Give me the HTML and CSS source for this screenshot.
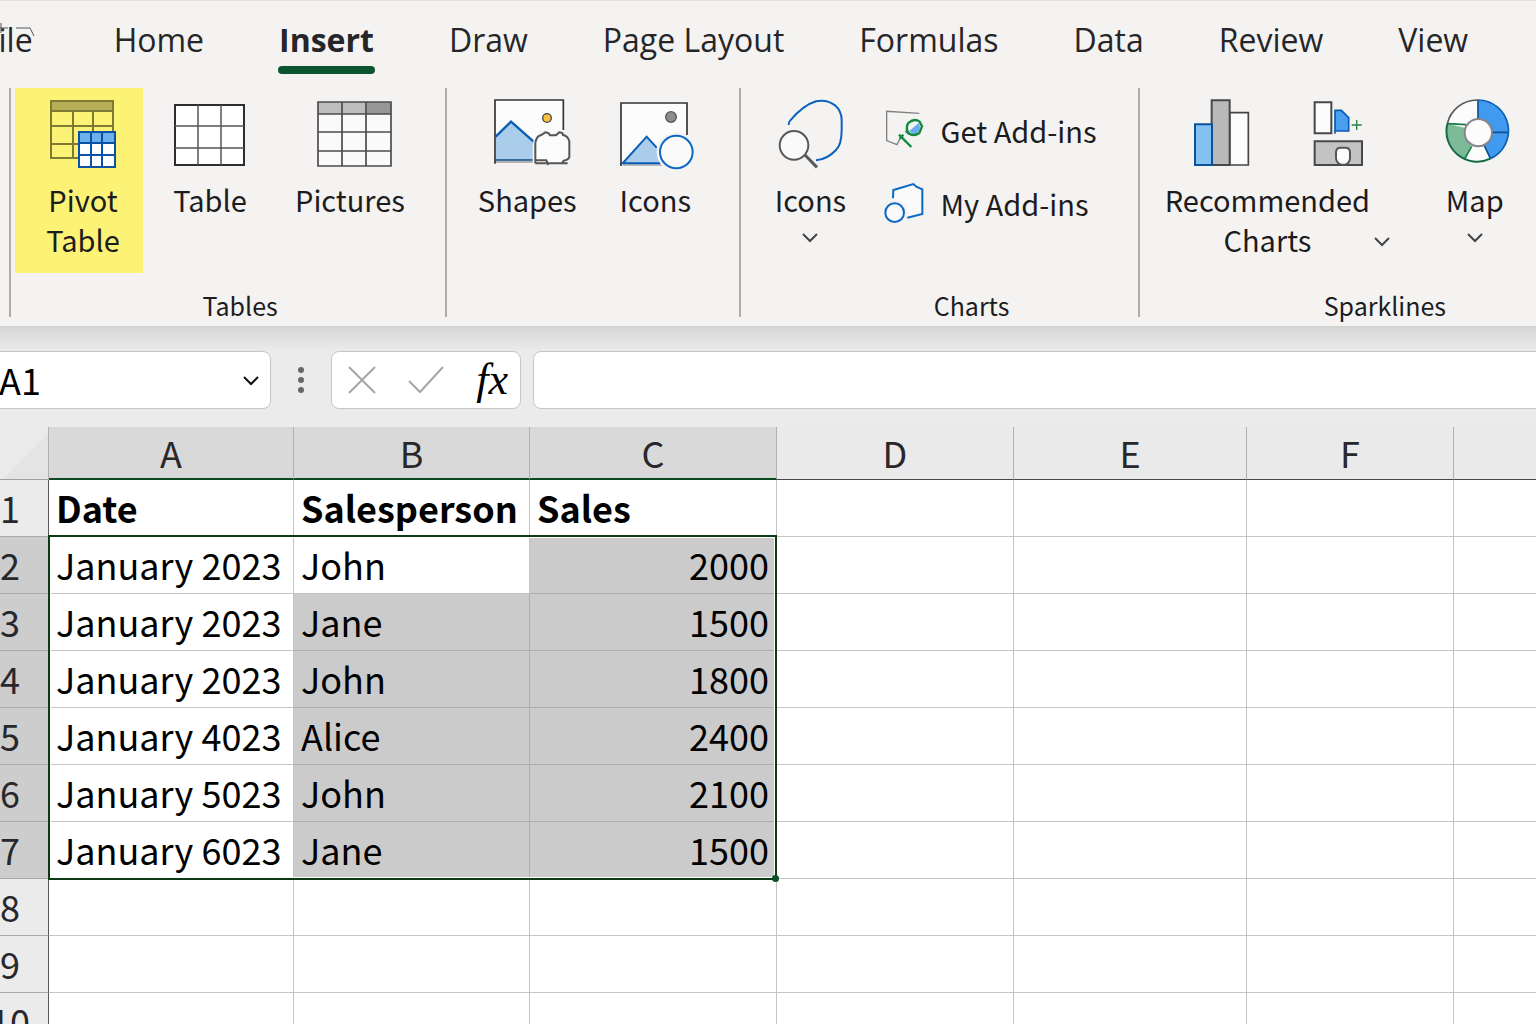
FILE: index.html
```html
<!DOCTYPE html>
<html lang="en">
<head>
  <meta charset="UTF-8">
  <meta name="viewport" content="width=device-width, initial-scale=1.0">
  <title>Spreadsheet</title>
  <link rel="stylesheet" href="styles.css">
</head>
<body>
  <nav class="tabs">
    <button class="tab">File</button>
    <button class="tab">Home</button>
    <button class="tab active">Insert</button>
    <button class="tab">Draw</button>
    <button class="tab">Page Layout</button>
    <button class="tab">Formulas</button>
    <button class="tab">Data</button>
    <button class="tab">Review</button>
    <button class="tab">View</button>
    <svg class="tab-mark" viewBox="0 0 36 16" aria-hidden="true">
      <path d="M1 0v10M0 5h8M16 5h14l4 8" fill="none" stroke="#555" stroke-width="1"/>
    </svg>
  </nav>

  <div class="ribbon">
    <section class="group tables">
      <div class="tools">
        <button class="tool highlight">
          <svg class="icon" viewBox="0 0 84 70" aria-hidden="true">
            <path d="M10 2h62v10H10z" fill="#b5ae57"/>
            <path d="M10 2h62v57H10zM10 12h62M10 27h62M10 45h62M32 12v47M52 12v47" fill="none" stroke="#7f7a33" stroke-width="2"/>
            <path d="M38 32h36v36H38z" fill="#fff"/>
            <path d="M38 32h36v12H38z" fill="#6cb0ea"/>
            <path d="M38 33h36v35H38zM38 44h36M38 56h36M50 32v36M61 32v36" fill="none" stroke="#0a52a8" stroke-width="2"/>
          </svg>
          <span>Pivot<br>Table</span>
        </button>
        <button class="tool">
          <svg class="icon" viewBox="0 0 84 70" aria-hidden="true">
            <path d="M7 6h69v60H7z" fill="#fff" stroke="#2e2e30" stroke-width="2"/>
            <path d="M30 6v60M53 6v60M7 27h69M7 49h69" stroke="#555" stroke-width="1.5"/>
          </svg>
          <span>Table</span>
        </button>
        <button class="tool">
          <svg class="icon" viewBox="0 0 84 70" aria-hidden="true">
            <path d="M10 3h73v64H10z" fill="#fafafa"/>
            <path d="M10 3h49v12H10z" fill="#bdbdbd"/>
            <path d="M59 3h24v12H59z" fill="#979797"/>
            <path d="M10 3h73v64H10zM10 15h73M10 33h73M10 52h73M34 3v64M58 3v64" fill="none" stroke="#4c4c4e" stroke-width="1.7"/>
          </svg>
          <span>Pictures</span>
        </button>
      </div>
      <h2>Tables</h2>
    </section>

    <section class="group media">
      <div class="tools">
        <button class="tool">
          <svg class="icon" viewBox="0 0 252 210" aria-hidden="true">
            <path d="M30 3h205v190H30z" fill="#fcfcfc"/>
            <path d="M33 113l45-45 68 60v56H33z" fill="#a9cdea"/>
            <path d="M32 113l46-45 68 60" fill="none" stroke="#0a5db5" stroke-width="7"/>
            <path d="M30 183h120" stroke="#114680" stroke-width="5"/>
            <path d="M30 189h120" stroke="#999" stroke-width="5"/>
            <path d="M30 194V3h205v90" fill="none" stroke="#333" stroke-width="5"/>
            <circle cx="186" cy="57" r="13" fill="#fcc13e" stroke="#444" stroke-width="4"/>
            <path d="M143 198v-62q6-38 36-42l20 10 22-12q46 10 38 44v62z" fill="#f4f3f2"/>
            <path d="M151 193v-60q3-22 18-25l12-8q12 2 14 9h18l10-9q11 1 11 8 15 3 19 19v47q-2 8-17 11l-4 6M152 184h32l6 14M151 193h97" fill="#fcfcfc" stroke="#555" stroke-width="6"/>
          </svg>
          <span>Shapes</span>
        </button>
        <button class="tool">
          <svg class="icon" viewBox="0 0 252 210" aria-hidden="true">
            <path d="M24 12h198v183H24z" fill="#fcfcfc"/>
            <path d="M29 193l72-80 30 33 14 47z" fill="#a9cdea"/>
            <path d="M30 198h120" stroke="#aaa" stroke-width="5"/>
            <path d="M131 146l-30-33-72 80h114" fill="none" stroke="#0a5db5" stroke-width="6"/>
            <path d="M24 201V12h198v96" fill="none" stroke="#333" stroke-width="5"/>
            <circle cx="174" cy="54" r="16" fill="#8c8c8c" stroke="#555" stroke-width="4"/>
            <circle cx="190" cy="159" r="49" fill="#fafafa" stroke="#f4f3f2" stroke-width="20"/>
            <circle cx="190" cy="159" r="49" fill="#fafafa" stroke="#0b68c4" stroke-width="6"/>
          </svg>
          <span>Icons</span>
        </button>
      </div>
    </section>

    <section class="group charts">
      <div class="tools">
        <button class="tool">
          <svg class="icon" viewBox="0 0 252 210" aria-hidden="true">
            <path d="M62 78q-1-8 5-14 40-46 77-57 32-7 57 12 20 17 20 45v28q0 45-17 61-26 28-60 31" fill="none" stroke="#0b62bd" stroke-width="6"/>
            <circle cx="78" cy="139" r="43" fill="#fafafa" stroke="#58585a" stroke-width="6"/>
            <path d="M111 168l36 37" stroke="#58585a" stroke-width="9"/>
          </svg>
          <span>Icons</span>
          <svg class="chevron" viewBox="0 0 16 10" aria-hidden="true"><path d="M1 1l7 7 7-7"/></svg>
        </button>
        <div class="addins">
          <button class="addin">
            <svg class="icon-small" viewBox="0 0 120 120" aria-hidden="true">
              <path d="M103 10L5 4v88l31 12 10-20" fill="none" stroke="#808080" stroke-width="4"/>
              <path d="M42 74l37 37M44 86l11-12M62 62l10 10" fill="none" stroke="#0f8a3e" stroke-width="7"/>
              <path d="M72 64l30-26q10 28-16 34z" fill="#6aaaf0"/>
              <path d="M70 39q18-16 34-4l7 14-8 20q-18 12-33 0-9-16 0-30z" fill="none" stroke="#0f8a3e" stroke-width="7"/>
            </svg>
            Get Add-ins
          </button>
          <button class="addin">
            <svg class="icon-small" viewBox="0 0 120 120" aria-hidden="true">
              <path d="M24 46l1-25 60-18 9 8 18 8v74l-45 11" fill="#fafafa" stroke="#0b68c4" stroke-width="6"/>
              <circle cx="29" cy="89" r="38" fill="#f4f3f2"/>
              <circle cx="29" cy="89" r="28" fill="#fafafa" stroke="#0b68c4" stroke-width="6"/>
            </svg>
            My Add-ins
          </button>
        </div>
      </div>
      <h2>Charts</h2>
    </section>

    <section class="group sparklines">
      <div class="tools">
        <button class="tool wide">
          <span class="icon-row">
            <svg viewBox="0 0 168 210" width="56" height="70" aria-hidden="true">
              <path d="M107 41h56v157h-56z" fill="#fcfcfc" stroke="#444" stroke-width="5"/>
              <path d="M53 4h54v194H53z" fill="#b9b9b9" stroke="#48484a" stroke-width="6"/>
              <path d="M3 76h51v122H3z" fill="#84c1f2" stroke="#0a5399" stroke-width="6"/>
            </svg>
            <svg viewBox="0 0 150 210" width="50" height="70" aria-hidden="true">
              <path d="M5 10h50v93H5z" fill="#fcfcfc" stroke="#48484a" stroke-width="6"/>
              <path d="M66 104V34h19l22 22v40H66" fill="#4a9ff0" stroke="#0a5bb0" stroke-width="5"/>
              <path d="M116 78h30M131 63v30" stroke="#268048" stroke-width="4"/>
              <path d="M5 127h142v71H5z" fill="#c3c3c3" stroke="#48484a" stroke-width="6"/>
              <path d="M69 160q0-14 14-14h14q14 0 14 14v18q-2 14-14 19H85q-14-4-16-19z" fill="#fcfcfc" stroke="#555" stroke-width="6"/>
            </svg>
          </span>
          <span class="label-row">
            <span>Recommended<br>Charts</span>
            <svg class="chevron" viewBox="0 0 16 10" aria-hidden="true"><path d="M1 1l7 7 7-7"/></svg>
          </span>
        </button>
        <button class="tool">
          <svg class="icon" viewBox="0 0 252 210" aria-hidden="true">
            <circle cx="135" cy="95" r="92" fill="#fcfcfc"/>
            <path d="M135 95V3a92 92 0 0 1 36 177z" fill="#3f9af0"/>
            <path d="M135 95L96 178A92 92 0 0 1 43 74z" fill="#7dbb98"/>
            <path d="M135 3v60M175 100h51M154 140l18 38" fill="none" stroke="#0d4f8f" stroke-width="5"/>
            <path d="M43 74l56 3M116 142l-20 36" fill="none" stroke="#16794a" stroke-width="5"/>
            <path d="M135 3a92 92 0 0 1 37 176" fill="none" stroke="#0d5fb0" stroke-width="5"/>
            <path d="M172 179A92 92 0 0 1 43 74" fill="none" stroke="#146b43" stroke-width="6"/>
            <path d="M43 74A92 92 0 0 1 135 3" fill="none" stroke="#555" stroke-width="5"/>
            <circle cx="136" cy="101" r="41" fill="#fcfcfc" stroke="#85858a" stroke-width="6"/>
          </svg>
          <span>Map</span>
          <svg class="chevron" viewBox="0 0 16 10" aria-hidden="true"><path d="M1 1l7 7 7-7"/></svg>
        </button>
      </div>
      <h2>Sparklines</h2>
    </section>
  </div>

  <div class="formula-bar">
    <div class="name-box">
      <input type="text" value="A1" aria-label="Name box">
      <button aria-label="Show names">
        <svg class="chevron" viewBox="0 0 16 10" aria-hidden="true"><path d="M1 1l7 7 7-7"/></svg>
      </button>
    </div>
    <svg class="dots" viewBox="0 0 6 28" aria-hidden="true">
      <circle cx="3" cy="4" r="3"/><circle cx="3" cy="14" r="3"/><circle cx="3" cy="24" r="3"/>
    </svg>
    <div class="entry-buttons">
      <button aria-label="Cancel">
        <svg viewBox="0 0 28 28" width="28" height="28" aria-hidden="true"><path d="M1 1l26 26M27 1L1 27"/></svg>
      </button>
      <button aria-label="Enter">
        <svg viewBox="0 0 36 28" width="36" height="28" aria-hidden="true"><path d="M1 15l11 11L35 1"/></svg>
      </button>
      <button class="fx" aria-label="Insert function">fx</button>
    </div>
    <input class="formula" type="text" aria-label="Formula">
  </div>

  <main class="sheet">
    <table>
      <colgroup>
        <col class="col-num"><col class="col-a"><col class="col-b"><col class="col-c">
        <col class="col-d"><col class="col-e"><col class="col-f"><col>
      </colgroup>
      <thead>
        <tr>
          <td class="corner"></td>
          <th class="on">A</th><th class="on">B</th><th class="on">C</th>
          <th>D</th><th>E</th><th>F</th><th></th>
        </tr>
      </thead>
      <tbody>
        <tr class="titles"><th>1</th><td>Date</td><td>Salesperson</td><td>Sales</td><td></td><td></td><td></td><td></td></tr>
        <tr class="on"><th>2</th><td>January 2023</td><td>John</td><td class="num fill">2000</td><td></td><td></td><td></td><td></td></tr>
        <tr class="on"><th>3</th><td>January 2023</td><td class="fill">Jane</td><td class="num fill">1500</td><td></td><td></td><td></td><td></td></tr>
        <tr class="on"><th>4</th><td>January 2023</td><td class="fill">John</td><td class="num fill">1800</td><td></td><td></td><td></td><td></td></tr>
        <tr class="on"><th>5</th><td>January 4023</td><td class="fill">Alice</td><td class="num fill">2400</td><td></td><td></td><td></td><td></td></tr>
        <tr class="on"><th>6</th><td>January 5023</td><td class="fill">John</td><td class="num fill">2100</td><td></td><td></td><td></td><td></td></tr>
        <tr class="on"><th>7</th><td>January 6023</td><td class="fill">Jane</td><td class="num fill">1500</td><td></td><td></td><td></td><td></td></tr>
        <tr><th>8</th><td></td><td></td><td></td><td></td><td></td><td></td><td></td></tr>
        <tr><th>9</th><td></td><td></td><td></td><td></td><td></td><td></td><td></td></tr>
        <tr><th>10</th><td></td><td></td><td></td><td></td><td></td><td></td><td></td></tr>
      </tbody>
    </table>
    <div class="selection"></div>
  </main>
</body>
</html>
```
FILE: styles.css
```css
* {
  box-sizing: border-box;
}
body {
  margin: 0;
  height: 100vh;
  overflow: hidden;
  background-color: #f4f3f2;
  color: #1c1c1e;
  font-family: "Open Sans", "Noto Sans", sans-serif;
}
button {
  padding: 0;
  border: none;
  background: none;
  color: inherit;
  font: inherit;
  cursor: pointer;
}
svg {
  display: block;
  flex: none;
  overflow: visible;
}

/* Tabs */
.tabs {
  position: relative;
  display: flex;
  gap: 75px;
  height: 88px;
  margin-left: -18px;
  padding-top: 15px;
  border-top: 1px solid #e2e2e2;
  font-size: 32px;
  line-height: 48px;
}
.tab {
  position: relative;
  height: 58px;
  padding-bottom: 10px;
  white-space: nowrap;
  color: #262628;
}
.tab:first-child {
  margin-right: 6px;
}
.tab.active {
  font-weight: bold;
}
.tab.active::after {
  content: "";
  position: absolute;
  left: -1px;
  right: -1px;
  bottom: 0;
  height: 8px;
  border-radius: 4px;
  background-color: #0a5530;
}
.tab-mark {
  position: absolute;
  left: 18px;
  top: 22px;
  width: 36px;
  height: 16px;
}

/* Ribbon */
.ribbon {
  display: grid;
  grid-template-columns: minmax(0, 436fr) minmax(0, 294fr) minmax(0, 398fr) minmax(0, 398fr);
  padding: 0 0 9px 9px;
  font-family: "Noto Sans CJK SC", sans-serif;
  font-size: 29px;
  line-height: 40px;
}
.group {
  display: flex;
  flex-direction: column;
  justify-content: space-between;
  height: 229px;
  border-left: 2px solid #adadad;
}
.group h2 {
  margin: 0;
  font-size: 25px;
  font-weight: normal;
  line-height: 24px;
  text-align: center;
}
.tools {
  display: flex;
  padding-left: 4px;
}
.tool {
  display: flex;
  flex-direction: column;
  align-items: center;
  width: 134px;
  padding-top: 11px;
}
.tool > span:not(.icon-row) {
  margin-top: 10px;
}
.highlight {
  width: 128px;
  height: 185px;
  padding-left: 8px;
  background-color: #fcf376;
}
.icon {
  width: 84px;
  height: 70px;
}
.chevron {
  width: 16px;
  height: 10px;
  margin-top: 14px;
  fill: none;
  stroke: #444;
  stroke-width: 2;
}
.tables .tool:last-child {
  width: 146px;
}
.tables h2 {
  padding-left: 24px;
}
.media .tools {
  padding-left: 16px;
}
.media .tool {
  width: 128px;
}
.charts .tools {
  padding-left: 2px;
}
.charts h2 {
  padding-left: 64px;
}
.addins {
  display: flex;
  flex-direction: column;
  gap: 33px;
  padding-top: 22px;
  padding-left: 8px;
}
.addin {
  display: flex;
  align-items: center;
  gap: 15px;
  white-space: nowrap;
}
.icon-small {
  width: 40px;
  height: 40px;
}
.sparklines .tools {
  padding-left: 25px;
}
.sparklines .tool {
  width: 120px;
}
.sparklines h2 {
  padding-left: 94px;
}
.sparklines .wide {
  align-items: flex-start;
  width: 250px;
}
.icon-row {
  display: flex;
  gap: 63px;
  padding-left: 29px;
}
.label-row {
  display: flex;
  align-items: flex-end;
  gap: 4px;
}
.label-row .chevron {
  margin-bottom: 12px;
}

/* Formula bar */
.formula-bar {
  display: flex;
  align-items: center;
  height: 101px;
  padding-bottom: 18px;
  padding-top: 24px;
  border-top: 1px solid #d0d0d0;
  background: linear-gradient(#d6d6d6, #ebebeb 24px);
}
.name-box,
.entry-buttons,
.formula {
  height: 58px;
  border: 1px solid #c6c6c6;
  border-radius: 8px;
  background-color: #fff;
}
.name-box {
  display: flex;
  align-items: center;
  width: 281px;
  margin-left: -10px;
  padding: 0 11px 0 8px;
}
.name-box input {
  flex: 1;
  min-width: 0;
  padding: 0 0 2px;
  border: none;
  background: none;
  color: #000;
  font: 36px/54px "Noto Sans CJK SC", sans-serif;
}
.name-box .chevron {
  margin-top: 2px;
  stroke: #111;
}
.dots {
  width: 6px;
  height: 28px;
  margin: 0 27px;
  fill: #666;
}
.entry-buttons {
  display: flex;
  align-items: center;
  justify-content: space-between;
  width: 190px;
  margin-right: 12px;
  padding: 0 12px 0 16px;
}
.entry-buttons path {
  fill: none;
  stroke: #a6a6a6;
  stroke-width: 2;
}
.fx {
  color: #000;
  font: italic 44px/50px "Liberation Serif", serif;
}
.formula {
  flex: 1;
  min-width: 0;
  margin-right: -10px;
  padding: 0 12px;
  font-size: 30px;
}

/* Sheet */
.sheet {
  position: relative;
  margin-left: -28px;
  font-family: "Noto Sans CJK SC", sans-serif;
}
table {
  width: 100%;
  table-layout: fixed;
  border-collapse: separate;
  border-spacing: 0;
  background-color: #fff;
  color: #000;
  font-size: 36px;
  line-height: 40px;
}
.col-num { width: 77px; }
.col-a { width: 245px; }
.col-b { width: 236px; }
.col-c { width: 247px; }
.col-d { width: 237px; }
.col-e { width: 233px; }
.col-f { width: 207px; }
th,
td {
  height: 57px;
  padding: 0 7px 2px;
  border-right: 1px solid #c4c4c4;
  border-bottom: 1px solid #c4c4c4;
  text-align: left;
  white-space: nowrap;
}
thead th,
thead td {
  height: 53px;
  background-color: #eaeaea;
  border-right-color: #b0b0b0;
  border-bottom-color: #48484c;
}
th:last-child,
td:last-child {
  border-right: none;
}
th {
  color: #28282c;
  font-weight: normal;
  text-align: center;
}
thead th.on {
  background-color: #d9d9d9;
  border-bottom: 2px solid #0d4a22;
}
thead .corner {
  background: linear-gradient(135deg, #ebebeb 64%, #e4e4e4 65%);
  border-bottom-color: #a0a0a0;
}
tbody th {
  background-color: #ebebeb;
  border-right-color: #58585c;
  border-bottom-color: #a8a8a8;
}
tbody .on th {
  background-color: #cdcdcd;
}
.titles td {
  font-weight: bold;
}
td.num {
  text-align: right;
}
td.fill {
  background-color: #cbcbcb;
  border-color: #adadad;
}
.selection {
  position: absolute;
  left: 76px;
  top: 108px;
  width: 729px;
  height: 345px;
  border: 2px solid #0b3a14;
  box-shadow: inset 0 0 0 1px #fff;
}
.selection::after {
  content: "";
  position: absolute;
  right: -4px;
  bottom: -4px;
  width: 7px;
  height: 7px;
  border-radius: 50%;
  background-color: #0c4f20;
}
```
